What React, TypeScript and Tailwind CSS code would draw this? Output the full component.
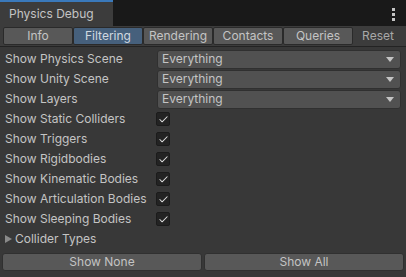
import { Check } from 'lucide-react';

const tabs = ['Info', 'Filtering', 'Rendering', 'Contacts', 'Queries'];

const scenes = ['Show Physics Scene', 'Show Unity Scene', 'Show Layers'];

const toggles = [
  'Show Static Colliders',
  'Show Triggers',
  'Show Rigidbodies',
  'Show Kinematic Bodies',
  'Show Articulation Bodies',
  'Show Sleeping Bodies',
];

function Dropdown({ value }: { value: string }) {
  return (
    <div className="flex-1 h-[19px] flex items-center justify-between pl-[4px] pr-[6px] bg-[#515151] border border-[#303030] rounded-[3px] text-[#c4c4c4]">
      <span>{value}</span>
      <svg width="8" height="5" viewBox="0 0 8 5"><path d="M0 0h8L4 5z" fill="#c4c4c4" /></svg>
    </div>
  );
}

function Toggle() {
  return (
    <div className="w-[14px] h-[14px] bg-[#232323] border border-[#1b1b1b] rounded-[2px] flex items-center justify-center">
      <Check size={11} strokeWidth={2.2} color="#e0e0e0" />
    </div>
  );
}

export default function App() {
  return (
    <div className="w-[406px] h-[277px] bg-[#383838] flex flex-col text-[12px] text-[#c4c4c4]" style={{ fontFamily: 'Inter, "Noto Sans", sans-serif' }}>
      <div className="h-[26px] bg-[#191919] flex justify-between shrink-0">
        <div className="w-[113px] bg-[#3c3c3c] border-t-2 border-[#3a79bb] pl-[9px] flex items-center text-[12px] text-[#c4c4c4]">Physics Debug</div>
        <div className="flex flex-col gap-[2px] pt-[8px] pr-[11px]">
          <div className="w-[3px] h-[3px] bg-[#c4c4c4]" />
          <div className="w-[3px] h-[3px] bg-[#c4c4c4]" />
          <div className="w-[3px] h-[3px] bg-[#c4c4c4]" />
        </div>
      </div>
      <div className="h-[21px] bg-[#3c3c3c] border-b border-[#232323] flex items-center pl-[3px] pr-[3px] shrink-0">
        {tabs.map((t) => (
          <div key={t} className={`w-[70px] h-[18px] flex items-center justify-center border border-[#2a2a2a] rounded-[2px] ${t === 'Filtering' ? 'bg-[#46607c] text-[#d0d8e0]' : 'bg-[#585858]'}`}>
            {t}
          </div>
        ))}
        <div className="flex-1 h-[18px] flex items-center justify-center text-[#a8a8a8]">Reset</div>
      </div>
      <div className="flex flex-col pt-[2px] pl-[5px] pr-[5px]">
        {scenes.map((s) => (
          <div key={s} className="h-[20px] flex items-center">
            <div className="w-[152px] shrink-0">{s}</div>
            <Dropdown value="Everything" />
          </div>
        ))}
        {toggles.map((s) => (
          <div key={s} className="h-[20px] flex items-center">
            <div className="w-[151px] shrink-0">{s}</div>
            <Toggle />
          </div>
        ))}
        <div className="h-[20px] flex items-center gap-[3px]">
          <svg width="7" height="8" viewBox="0 0 7 8"><path d="M0 0l7 4-7 4z" fill="#8a8a8a" /></svg>
          <span>Collider Types</span>
        </div>
      </div>
      <div className="flex gap-[2px] px-[2px] mt-[4px]">
        <div className="flex-1 h-[18px] bg-[#585858] border border-[#303030] rounded-[3px] flex items-center justify-center">Show None</div>
        <div className="flex-1 h-[18px] bg-[#585858] border border-[#303030] rounded-[3px] flex items-center justify-center">Show All</div>
      </div>
    </div>
  );
}
